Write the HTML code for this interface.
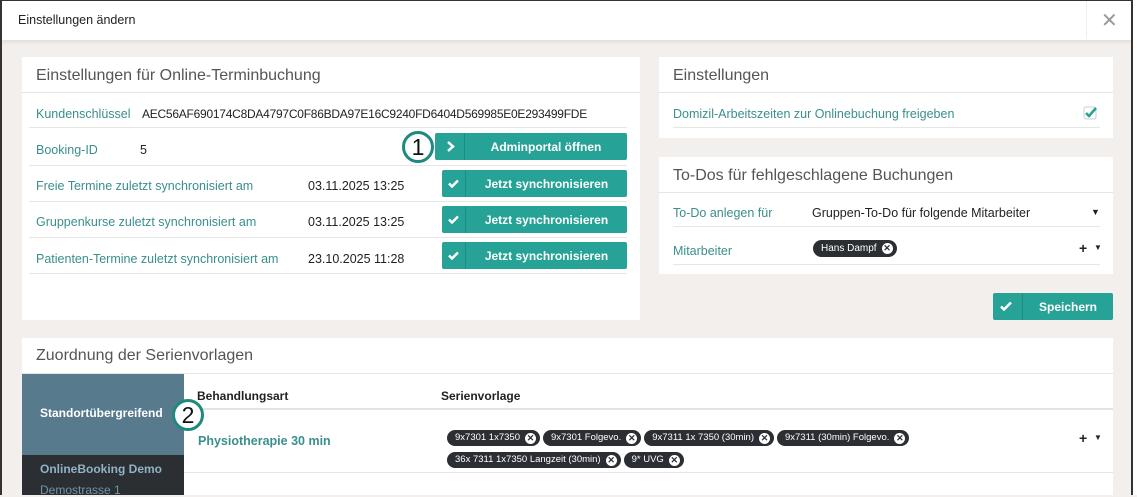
<!DOCTYPE html>
<html><head><meta charset="utf-8"><style>
*{box-sizing:border-box;margin:0;padding:0}
body{width:1137px;height:495px;overflow:hidden;background:#f2efec;font-family:"Liberation Sans",sans-serif;position:relative;color:#222}
.a{position:absolute}
.hdr{left:0;top:0;width:1133px;height:40px;background:#fff;border-left:2px solid #333;border-top:1px solid #333;box-shadow:0 2px 4px rgba(0,0,0,.08)}
.bl{left:0;top:0;width:2px;height:495px;background:#333}
.br{left:1131px;top:0;width:2px;height:495px;background:#333}
.rbg{left:1133px;top:0;width:4px;height:495px;background:#fff}
.p{background:#fff}
.t{font-size:16px;color:#555}
.lbl{font-size:12.5px;color:#3a8f8c}
.v{font-size:12.5px;color:#222}
.ln{height:1px;background:#e6e6e6}
.btn{background:#26a296;color:#fff;font-weight:bold;font-size:12px;border-radius:2px}
.btn .ic{position:absolute;left:0;top:0;width:24px;height:100%;border-right:1px solid #1f8c82}
.btn .tx{position:absolute;left:24px;right:0;top:0;height:100%;display:flex;align-items:center;justify-content:center}
.chip{background:#2b2f33;color:#fff;font-size:9.5px;border-radius:9px;height:16px;line-height:16px;padding:0 4px 0 8px;display:inline-flex;align-items:center;gap:5px}
.x{width:11px;height:11px;border-radius:50%;background:#fff;color:#2b2f33;font-size:9px;line-height:11px;text-align:center;font-weight:bold}
.circ{width:32px;height:32px;border-radius:50%;border:3px solid #1e8a7e;background:#fff;font-size:23px;line-height:26px;text-align:center;color:#111}
</style></head><body>
<div class="a hdr"></div>
<div class="a bl"></div><div class="a br"></div><div class="a rbg"></div>
<div class="a" style="left:18px;top:13px;font-size:12.5px">Einstellungen ändern</div>
<div class="a" style="left:1086px;top:1px;width:1px;height:38px;background:#eee"></div>
<div class="a" style="left:1101px;top:8px;font-size:20px;color:#999">✕</div>

<div class="a p" style="left:22px;top:57px;width:618px;height:263px"></div>
<div class="a t" style="left:36px;top:67px">Einstellungen für Online-Terminbuchung</div>
<div class="a ln" style="left:22px;top:92px;width:618px"></div>
<div class="a lbl" style="left:36px;top:107px">Kundenschlüssel</div>
<div class="a v" style="left:142px;top:107px;font-size:12px;letter-spacing:-0.25px">AEC56AF690174C8DA4797C0F86BDA97E16C9240FD6404D569985E0E293499FDE</div>
<div class="a ln" style="left:29px;top:127px;width:598px"></div>
<div class="a lbl" style="left:36px;top:143px">Booking-ID</div>
<div class="a v" style="left:140px;top:143px">5</div>
<div class="a ln" style="left:29px;top:165px;width:598px"></div>
<div class="a lbl" style="left:36px;top:179px">Freie Termine zuletzt synchronisiert am</div>
<div class="a v" style="left:308px;top:179px">03.11.2025 13:25</div>
<div class="a ln" style="left:29px;top:201px;width:598px"></div>
<div class="a lbl" style="left:36px;top:215px">Gruppenkurse zuletzt synchronisiert am</div>
<div class="a v" style="left:308px;top:215px">03.11.2025 13:25</div>
<div class="a ln" style="left:29px;top:237px;width:598px"></div>
<div class="a lbl" style="left:36px;top:252px">Patienten-Termine zuletzt synchronisiert am</div>
<div class="a v" style="left:308px;top:252px">23.10.2025 11:28</div>
<div class="a ln" style="left:29px;top:273px;width:598px"></div>

<div class="a btn" style="left:435px;top:133px;width:192px;height:27px"><div class="ic" style="width:30px"><svg width="30" height="27"><path d="M13 9l5 4.5-5 4.5" stroke="#fff" stroke-width="2.5" fill="none"/></svg></div><div class="tx" style="left:30px">Adminportal öffnen</div></div>
<div class="a btn" style="left:442px;top:170px;width:185px;height:27px"><div class="ic"><svg width="24" height="27"><path d="M7 13.5l3 3 6-6" stroke="#fff" stroke-width="2.5" fill="none"/></svg></div><div class="tx">Jetzt synchronisieren</div></div>
<div class="a btn" style="left:442px;top:206px;width:185px;height:27px"><div class="ic"><svg width="24" height="27"><path d="M7 13.5l3 3 6-6" stroke="#fff" stroke-width="2.5" fill="none"/></svg></div><div class="tx">Jetzt synchronisieren</div></div>
<div class="a btn" style="left:442px;top:242px;width:185px;height:27px"><div class="ic"><svg width="24" height="27"><path d="M7 13.5l3 3 6-6" stroke="#fff" stroke-width="2.5" fill="none"/></svg></div><div class="tx">Jetzt synchronisieren</div></div>
<div class="a circ" style="left:402px;top:131px">1</div>

<div class="a p" style="left:659px;top:57px;width:454px;height:81px"></div>
<div class="a t" style="left:673px;top:67px">Einstellungen</div>
<div class="a ln" style="left:659px;top:92px;width:454px"></div>
<div class="a lbl" style="left:673px;top:107px">Domizil-Arbeitszeiten zur Onlinebuchung freigeben</div>
<svg class="a" style="left:1083px;top:106px" width="16" height="14"><rect x="1" y="1" width="12" height="12" rx="2" fill="#fff" stroke="#ccc"/><path d="M3 7l3 3 7-8" stroke="#26a296" stroke-width="2.5" fill="none"/></svg>
<div class="a ln" style="left:673px;top:127px;width:427px"></div>

<div class="a p" style="left:659px;top:157px;width:454px;height:117px"></div>
<div class="a t" style="left:673px;top:167px">To-Dos für fehlgeschlagene Buchungen</div>
<div class="a ln" style="left:659px;top:192px;width:454px"></div>
<div class="a lbl" style="left:673px;top:206px">To-Do anlegen für</div>
<div class="a v" style="left:812px;top:206px">Gruppen-To-Do für folgende Mitarbeiter</div>
<div class="a" style="left:1091px;top:207px;font-size:9px">▼</div>
<div class="a ln" style="left:673px;top:226px;width:427px"></div>
<div class="a lbl" style="left:673px;top:244px">Mitarbeiter</div>
<div class="a chip" style="left:813px;top:240px;height:17px;font-size:10px">Hans Dampf <span class="x">✕</span></div>
<div class="a" style="left:1079px;top:240px;font-size:14px;font-weight:bold">+</div>
<div class="a" style="left:1094px;top:243px;font-size:8px">▼</div>
<div class="a ln" style="left:673px;top:264px;width:427px"></div>

<div class="a btn" style="left:993px;top:293px;width:120px;height:27px"><div class="ic" style="width:30px"><svg width="30" height="27"><path d="M8 13.5l3 3 7-7" stroke="#fff" stroke-width="2.5" fill="none"/></svg></div><div class="tx" style="left:30px">Speichern</div></div>

<div class="a p" style="left:22px;top:338px;width:1091px;height:157px"></div>
<div class="a t" style="left:36px;top:347px">Zuordnung der Serienvorlagen</div>
<div class="a ln" style="left:22px;top:373px;width:1091px"></div>
<div class="a" style="left:22px;top:374px;width:162px;height:81px;background:#577a8d"></div>
<div class="a" style="left:22px;top:455px;width:162px;height:40px;background:#2b2f33"></div>
<div class="a" style="left:40px;top:406px;color:#fff;font-weight:bold;font-size:12px">Standortübergreifend</div>
<div class="a" style="left:40px;top:462px;color:#8fb3c4;font-weight:bold;font-size:12px">OnlineBooking Demo</div>
<div class="a" style="left:40px;top:483px;color:#6f95a8;font-size:12px">Demostrasse 1</div>
<div class="a" style="left:197px;top:389px;font-size:12px;font-weight:bold">Behandlungsart</div>
<div class="a" style="left:441px;top:389px;font-size:12px;font-weight:bold">Serienvorlage</div>
<div class="a" style="left:184px;top:408px;width:929px;height:2px;background:#e3e3e3"></div>
<div class="a circ" style="left:172px;top:399px">2</div>
<div class="a" style="left:198px;top:434px;font-size:12.5px;font-weight:bold;color:#3a8f8c">Physiotherapie 30 min</div>
<div class="a" style="left:447px;top:430px;display:flex;gap:3px">
<span class="chip">9x7301 1x7350 <span class="x">✕</span></span>
<span class="chip">9x7301 Folgevo. <span class="x">✕</span></span>
<span class="chip">9x7311 1x 7350 (30min) <span class="x">✕</span></span>
<span class="chip">9x7311 (30min) Folgevo. <span class="x">✕</span></span>
</div>
<div class="a" style="left:447px;top:452px;display:flex;gap:3px">
<span class="chip">36x 7311 1x7350 Langzeit (30min) <span class="x">✕</span></span>
<span class="chip">9* UVG <span class="x">✕</span></span>
</div>
<div class="a" style="left:1079px;top:430px;font-size:14px;font-weight:bold">+</div>
<div class="a" style="left:1094px;top:433px;font-size:8px">▼</div>
<div class="a ln" style="left:184px;top:472px;width:929px"></div>
</body></html>
